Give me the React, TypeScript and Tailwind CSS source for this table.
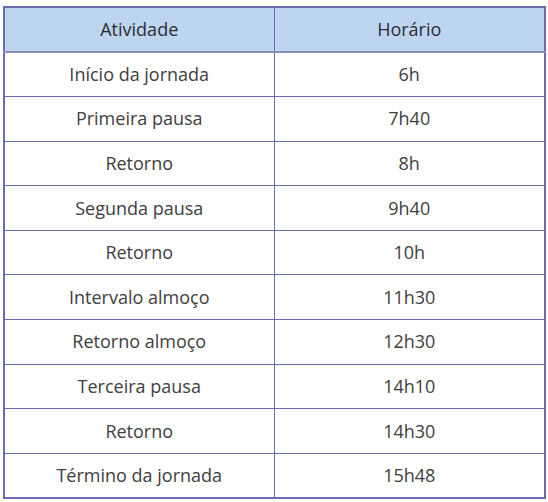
import React from "react";

const rows: [string, string][] = [
  ["Início da jornada", "6h"],
  ["Primeira pausa", "7h40"],
  ["Retorno", "8h"],
  ["Segunda pausa", "9h40"],
  ["Retorno", "10h"],
  ["Intervalo almoço", "11h30"],
  ["Retorno almoço", "12h30"],
  ["Terceira pausa", "14h10"],
  ["Retorno", "14h30"],
  ["Término da jornada", "15h48"],
];

export default function App() {
  return (
    <div
      className="w-[548px] h-[502px] bg-white pt-[6px] pl-[3px]"
      style={{ fontFamily: '"Open Sans", "Liberation Sans", sans-serif' }}
    >
      <table className="w-[541px] border-collapse border-2 border-[#6a6cae] text-[18px] text-[#404040] table-fixed">
        <colgroup>
          <col className="w-[270px]" />
          <col className="w-[271px]" />
        </colgroup>
        <thead>
          <tr className="h-[45px] bg-[#bdd5ee]">
            <th className="border border-[#6a6cae] border-b-2 border-b-[#8a8cb8] font-normal text-[#2c2c38] text-center align-middle">
              Atividade
            </th>
            <th className="border border-[#6a6cae] border-b-2 border-b-[#8a8cb8] font-normal text-[#2c2c38] text-center align-middle">
              Horário
            </th>
          </tr>
        </thead>
        <tbody>
          {rows.map(([a, h], i) => (
            <tr key={i} className="h-[44.6px]">
              <td className="border border-[#6a6cae] text-center align-middle">{a}</td>
              <td className="border border-[#6a6cae] text-center align-middle">{h}</td>
            </tr>
          ))}
        </tbody>
      </table>
    </div>
  );
}
